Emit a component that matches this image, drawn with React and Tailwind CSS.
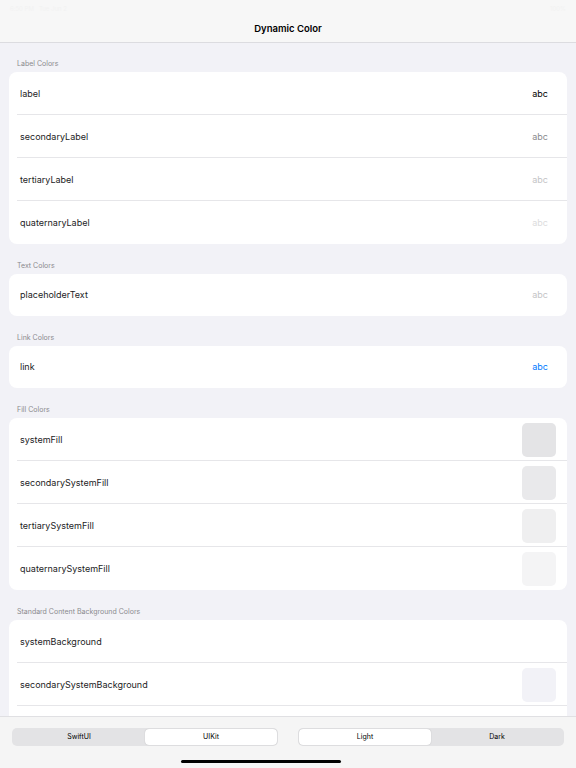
const font = { fontFamily: "Inter, 'Noto Sans', sans-serif" };

const sections = [
  {
    title: "Label Colors",
    rows: [
      { name: "label", abc: "text-black" },
      { name: "secondaryLabel", abc: "text-[#8a8a8e]" },
      { name: "tertiaryLabel", abc: "text-[#c4c4c6]" },
      { name: "quaternaryLabel", abc: "text-[#dcdcdd]" },
    ],
  },
  {
    title: "Text Colors",
    rows: [{ name: "placeholderText", abc: "text-[#c4c4c6]" }],
  },
  {
    title: "Link Colors",
    rows: [{ name: "link", abc: "text-[#007aff]" }],
  },
  {
    title: "Fill Colors",
    rows: [
      { name: "systemFill", swatch: "bg-[#e4e4e6]" },
      { name: "secondarySystemFill", swatch: "bg-[#e9e9eb]" },
      { name: "tertiarySystemFill", swatch: "bg-[#efeff0]" },
      { name: "quaternarySystemFill", swatch: "bg-[#f4f4f5]" },
    ],
  },
  {
    title: "Standard Content Background Colors",
    rows: [
      { name: "systemBackground" },
      { name: "secondarySystemBackground", swatch: "bg-[#f2f2f7]" },
      { name: "" },
    ],
  },
];

function Row({ row, last, single }) {
  return (
    <div
      className={`relative flex items-center pl-[11px] pr-[19px] ${
        single ? "h-[42px]" : "h-[43px]"
      }`}
    >
      <span className="text-[9px] text-[#1c1c1e]">{row.name}</span>
      <div className="ml-auto flex items-center">
        {row.abc && <span className={`text-[9px] ${row.abc}`}>abc</span>}
        {row.swatch && (
          <div className={`h-[34px] w-[34px] -mr-[8px] rounded-[5px] ${row.swatch}`} />
        )}
      </div>
      {!last && (
        <div className="absolute bottom-0 left-[8px] right-0 h-px bg-[#e6e6e9]" />
      )}
    </div>
  );
}

function Segmented({ options, active }) {
  return (
    <div className="flex h-[18px] flex-1 rounded-[5px] bg-[#e3e3e5] p-[1px]">
      {options.map((o, i) => (
        <div
          key={o}
          className={`flex flex-1 items-center justify-center rounded-[4px] text-[7px] text-black ${
            i === active ? "bg-white shadow-[0_0_1px_rgba(0,0,0,0.25)]" : ""
          }`}
        >
          {o}
        </div>
      ))}
    </div>
  );
}

export default function App() {
  return (
    <div className="relative h-[768px] w-[576px] overflow-hidden bg-[#f2f2f7]" style={font}>
      {/* nav bar */}
      <div className="h-[43px] border-b border-[#dcdce0] bg-[#f7f7f7]">
        <div className="flex h-[16px] items-center justify-between px-[10px] text-[6px] text-[#f2f2f2]">
          <span>6:50 PM&nbsp;&nbsp; Tue Jun 2</span>
          <span>100%</span>
        </div>
        <div className="flex h-[26px] items-center justify-center text-[9.5px] font-semibold text-black">
          Dynamic Color
        </div>
      </div>

      <div className="flex flex-col px-[9px] pt-[16px]">
        {sections.map((s) => (
          <div key={s.title} className="mb-[17px]">
            <div className="mb-[4px] h-[9px] pl-[8px] text-[7px] leading-[9px] text-[#8a8a8e]">
              {s.title}
            </div>
            <div className="overflow-hidden rounded-[8px] bg-white">
              {s.rows.map((r, i) => (
                <Row
                  key={r.name || i}
                  row={r}
                  single={s.rows.length === 1}
                  last={i === s.rows.length - 1}
                />
              ))}
            </div>
          </div>
        ))}
      </div>

      {/* bottom toolbar */}
      <div className="absolute bottom-0 left-0 right-0 h-[52px] border-t border-[#e0e0e3] bg-[#f4f4f4]/95">
        <div className="flex gap-[20px] px-[12px] pt-[11px]">
          <Segmented options={["SwiftUI", "UIKit"]} active={1} />
          <Segmented options={["Light", "Dark"]} active={0} />
        </div>
        <div className="absolute bottom-[5px] left-[181px] h-[3px] w-[160px] rounded-full bg-black" />
      </div>
    </div>
  );
}
